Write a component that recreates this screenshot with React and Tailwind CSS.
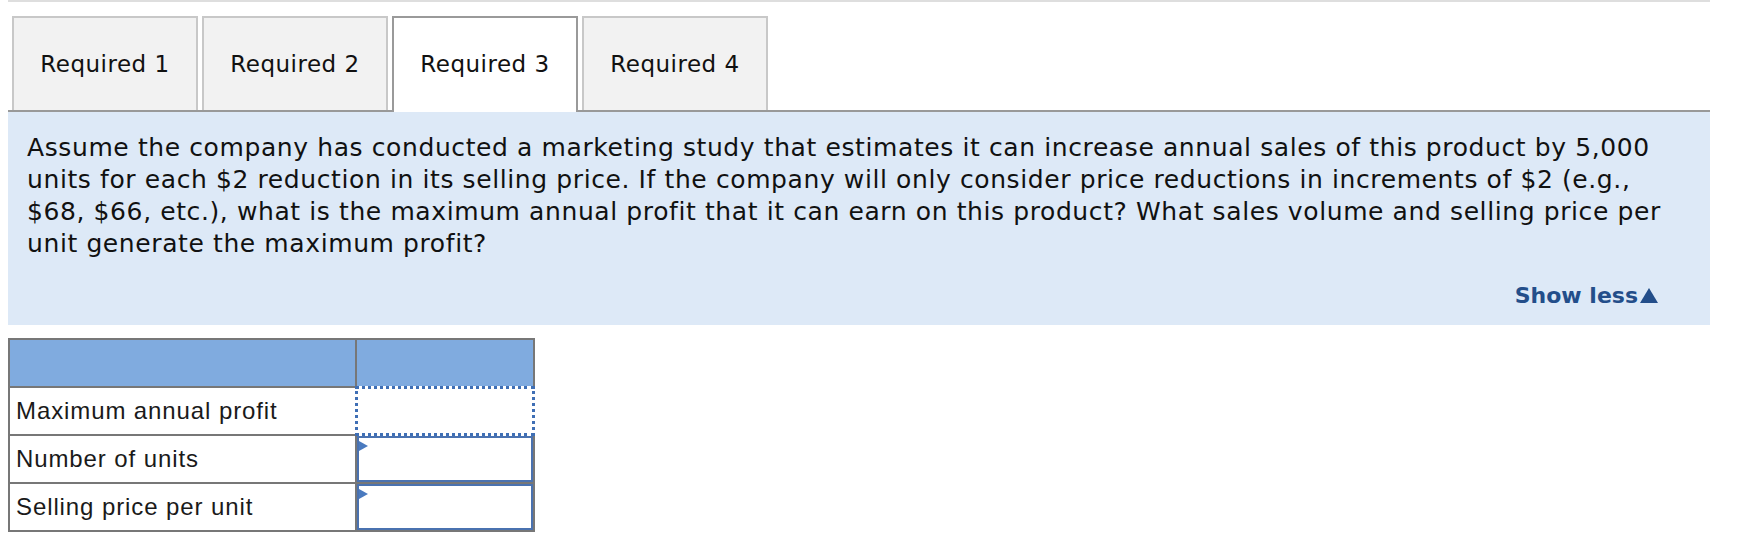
import React from "react";

const tabs = ["Required 1", "Required 2", "Required 3", "Required 4"];
const rows = ["Maximum annual profit", "Number of units", "Selling price per unit"];

const verdana = { fontFamily: '"DejaVu Sans", Verdana, sans-serif' };

export default function App() {
  return (
    <div className="h-[542px] w-[1764px] overflow-hidden bg-white" style={verdana}>
      <div className="ml-[8px] w-[1702px]">
        <div className="h-[2px] bg-[#dedede]" />
        <div className="flex gap-[4px] pl-[4px] pt-[14px]">
          {tabs.map((t, i) =>
            i === 2 ? (
              <div
                key={t}
                className="relative z-10 -mb-[2px] flex h-[96px] w-[186px] items-center justify-center border-2 border-b-0 border-[#9a9a9a] bg-white pb-[2px] text-[23px] tracking-[0.5px] text-[#111]"
              >
                {t}
              </div>
            ) : (
              <div
                key={t}
                className="flex h-[94px] w-[186px] items-center justify-center border-2 border-b-0 border-[#c8c8c8] bg-[#f2f2f2] text-[23px] tracking-[0.5px] text-[#111]"
              >
                {t}
              </div>
            )
          )}
        </div>
        <div className="h-[2px] bg-[#999999]" />
        <div className="bg-[#dde9f7] pb-[16px] pl-[19px] pr-[52px] pt-[20px]">
          <div className="text-[25px] leading-[32px] tracking-[0.6px] text-[#111]">
            <div className="whitespace-nowrap">
              Assume the company has conducted a marketing study that estimates it can increase annual sales of this product by 5,000
            </div>
            <div className="whitespace-nowrap">
              units for each $2 reduction in its selling price. If the company will only consider price reductions in increments of $2 (e.g.,
            </div>
            <div className="whitespace-nowrap">
              $68, $66, etc.), what is the maximum annual profit that it can earn on this product? What sales volume and selling price per
            </div>
            <div className="whitespace-nowrap">unit generate the maximum profit?</div>
          </div>
          <div className="mt-[21px] flex h-[28px] items-center justify-end text-[22px] font-bold text-[#234e8a]">
            <span>Show less</span>
            <span className="ml-[2px] h-0 w-0 border-x-[9px] border-b-[15px] border-x-transparent border-b-[#234e8a]" />
          </div>
        </div>

        <div
          className="mt-[13px] w-[527px] border-2 border-[#777777]"
          style={{ fontFamily: '"Liberation Sans", Arial, sans-serif' }}
        >
          <div className="flex h-[46px] bg-[#80abdf]">
            <div className="w-[347px] border-r-2 border-[#777777]" />
            <div className="flex-1" />
          </div>
          {rows.map((r, i) => (
            <div key={r} className="flex h-[48px] border-t-2 border-[#777777]">
              <div className="flex w-[347px] items-center border-r-2 border-[#777777] pl-[6px] text-[24px] tracking-[0.9px] text-[#1a1a1a]">
                {r}
              </div>
              <div className="relative flex-1 bg-white">
                {i === 0 ? (
                  <div className="absolute -bottom-[2px] -left-[2px] -right-[2px] -top-[2px] border-[3px] border-dotted border-[#3f6fb5] bg-white" />
                ) : (
                  <div className="relative h-full w-full border-2 border-[#4a72b0]">
                    <span className="absolute left-0 top-[3px] h-0 w-0 border-y-[5px] border-l-[9px] border-y-transparent border-l-[#4a7abf]" />
                  </div>
                )}
              </div>
            </div>
          ))}
        </div>
      </div>
    </div>
  );
}
